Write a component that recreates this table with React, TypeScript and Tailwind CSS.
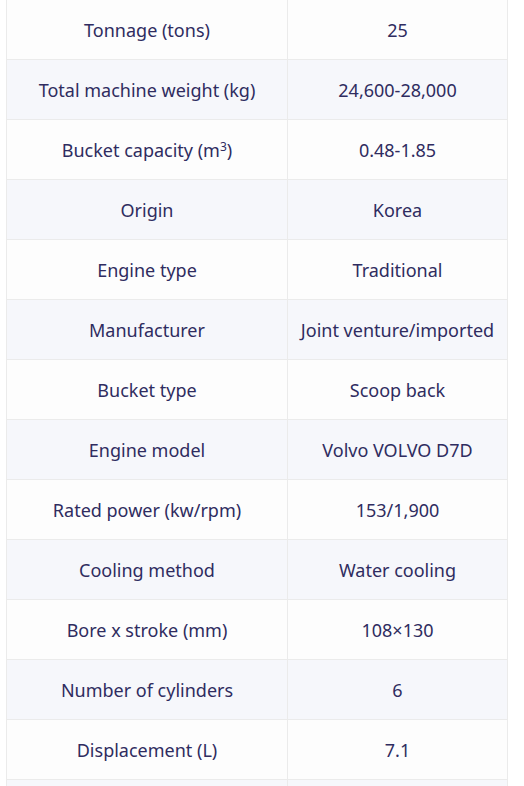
const specs: [React.ReactNode, string][] = [
  ["Tonnage (tons)", "25"],
  ["Total machine weight (kg)", "24,600-28,000"],
  [
    <>
      Bucket capacity (m<sup className="text-[12px]">3</sup>)
    </>,
    "0.48-1.85",
  ],
  ["Origin", "Korea"],
  ["Engine type", "Traditional"],
  ["Manufacturer", "Joint venture/imported"],
  ["Bucket type", "Scoop back"],
  ["Engine model", "Volvo VOLVO D7D"],
  ["Rated power (kw/rpm)", "153/1,900"],
  ["Cooling method", "Water cooling"],
  ["Bore x stroke (mm)", "108×130"],
  ["Number of cylinders", "6"],
  ["Displacement (L)", "7.1"],
  ["", ""],
];

export default function App() {
  return (
    <div className="h-[786px] overflow-hidden bg-white pl-[6px] font-['Noto_Sans',sans-serif] text-[#2f2c60]">
      <table className="-mt-px border-collapse text-[18px]">
        <tbody>
          {specs.map(([label, value], i) => (
            <tr key={i} className={i % 2 ? "bg-[#f6f7fb]" : "bg-[#fdfdfd]"}>
              <td className="h-[60px] w-[281px] border border-[#ebebeb] pt-[2px] text-center align-middle">
                {label}
              </td>
              <td className="h-[60px] w-[220px] border border-[#ebebeb] pt-[2px] text-center align-middle">
                {value}
              </td>
            </tr>
          ))}
        </tbody>
      </table>
    </div>
  );
}
